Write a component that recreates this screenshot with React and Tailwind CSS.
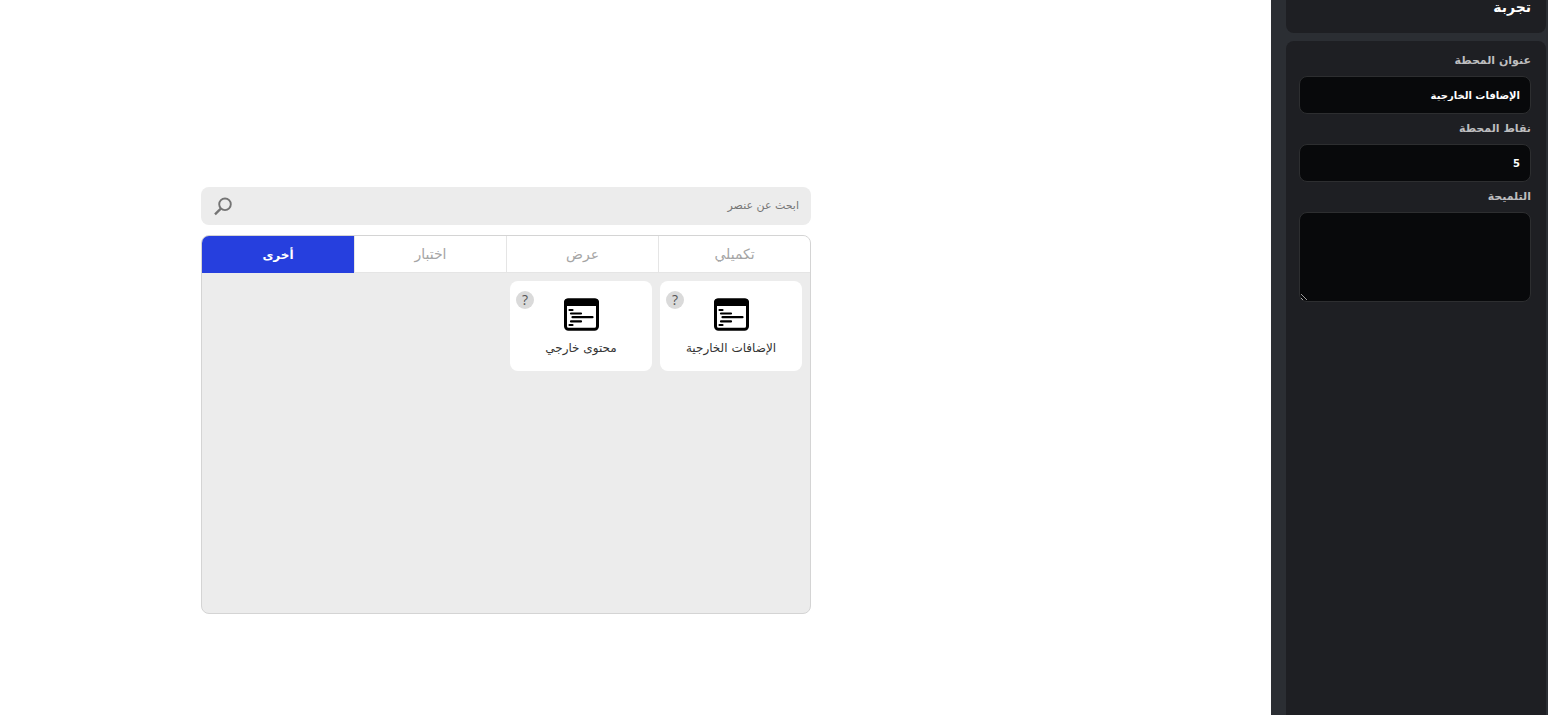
import React, { useState } from 'react';

const tabs = ['تكميلي', 'عرض', 'اختبار', 'أخرى'];

const elements = [
  { id: 'addons', label: 'الإضافات الخارجية' },
  { id: 'content', label: 'محتوى خارجي' },
];

const WindowIcon = () => (
  <svg width="36" height="33" viewBox="0 0 36 33" aria-hidden="true">
    <rect x="2.5" y="2" width="32" height="29.2" rx="3" fill="#fff" stroke="#000" strokeWidth="3" />
    <path d="M1 8V4.5A4 4 0 0 1 5 .5h27a4 4 0 0 1 4 4V8z" fill="#000" />
    <path
      d="M6.5 12h3M8 15.5h10M9.5 19.2h20M8 23.4h10M6.5 27h3"
      fill="none"
      stroke="#000"
      strokeWidth="2.2"
      strokeLinecap="round"
    />
  </svg>
);

const SearchIcon = () => (
  <svg width="20" height="20" viewBox="0 0 20 20" fill="none" stroke="#747474" aria-hidden="true">
    <circle cx="12" cy="8.3" r="5.8" strokeWidth="1.9" />
    <path d="M7.8 12.6L2 18.4" strokeWidth="2.3" />
  </svg>
);

const fieldClass =
  'block w-full rounded-lg border border-[#2d2e30] bg-[#08090b] px-[10px] text-[10px] font-bold text-white outline-none';

const Field = ({ id, label, children }) => (
  <div>
    <label htmlFor={id} className="block text-[11px] leading-[30px] font-bold text-[#bdbdbf]">
      {label}
    </label>
    {children}
  </div>
);

const ElementCard = ({ label }) => (
  <div className="relative">
    <button
      type="button"
      className="flex h-[90px] w-full flex-col items-center rounded-lg bg-white pt-[17px] text-[#333]"
    >
      <WindowIcon />
      <span className="mt-2 text-xs leading-[18px] whitespace-nowrap">{label}</span>
    </button>
    <button
      type="button"
      aria-label={`مساعدة: ${label}`}
      className="absolute top-[10px] left-[6px] flex size-[18px] items-center justify-center rounded-full bg-[#dadada] font-['Open_Sans',sans-serif] text-sm leading-none text-[#555]"
    >
      ?
    </button>
  </div>
);

const Sidebar = () => (
  <aside className="flex w-[277px] shrink-0 flex-col gap-2 bg-[#2b2e33] ps-[2px] pe-[15px]">
    <header className="rounded-b-lg bg-[#1e1f23] ps-[15px] pe-[13px] pb-[18px]">
      <h1 className="text-sm leading-[15px] font-bold text-white">تجربة</h1>
    </header>
    <form className="grow rounded-t-lg bg-[#1e1f23] ps-[15px] pe-[13px] pt-[5px]">
      <Field id="title" label="عنوان المحطة">
        <input id="title" type="text" defaultValue="الإضافات الخارجية" className={`${fieldClass} h-[38px]`} />
      </Field>
      <Field id="points" label="نقاط المحطة">
        <input id="points" type="text" defaultValue="5" className={`${fieldClass} h-[38px]`} />
      </Field>
      <Field id="hint" label="التلميحة">
        <textarea id="hint" className={`${fieldClass} h-[90px] resize-y py-2`} />
      </Field>
    </form>
  </aside>
);

const App = () => {
  const [active, setActive] = useState('أخرى');

  return (
    <div dir="rtl" className="flex min-h-screen bg-white font-['DejaVu_Sans',sans-serif]">
      <Sidebar />
      <main className="flex grow items-center justify-center ps-[259px] pt-[86px]">
        <div className="flex w-full max-w-[610px] flex-col gap-[10px]">
          <div className="flex h-[38px] items-center rounded-lg bg-[#ececec] px-3">
            <input
              type="search"
              aria-label="ابحث عن عنصر"
              placeholder="ابحث عن عنصر"
              className="min-w-0 grow bg-transparent text-[11px] text-[#333] outline-none placeholder:text-[#757575]"
            />
            <button type="button" aria-label="بحث">
              <SearchIcon />
            </button>
          </div>

          <section className="h-[379px] overflow-hidden rounded-lg border border-[#d4d4d4] bg-[#ececec]">
            <div role="tablist" className="grid grid-cols-4">
              {tabs.map((tab) => (
                <button
                  key={tab}
                  type="button"
                  role="tab"
                  aria-selected={tab === active}
                  onClick={() => setActive(tab)}
                  className={
                    tab === active
                      ? 'h-[37px] bg-[#263fde] text-xs font-bold text-white'
                      : 'h-[37px] border-b border-e border-[#e5e5e5] bg-white text-sm text-[#a5a5a5]'
                  }
                >
                  {tab}
                </button>
              ))}
            </div>
            <div className="grid grid-cols-4 gap-2 p-2">
              {elements.map((item) => (
                <ElementCard key={item.id} label={item.label} />
              ))}
            </div>
          </section>
        </div>
      </main>
    </div>
  );
};

export default App;
